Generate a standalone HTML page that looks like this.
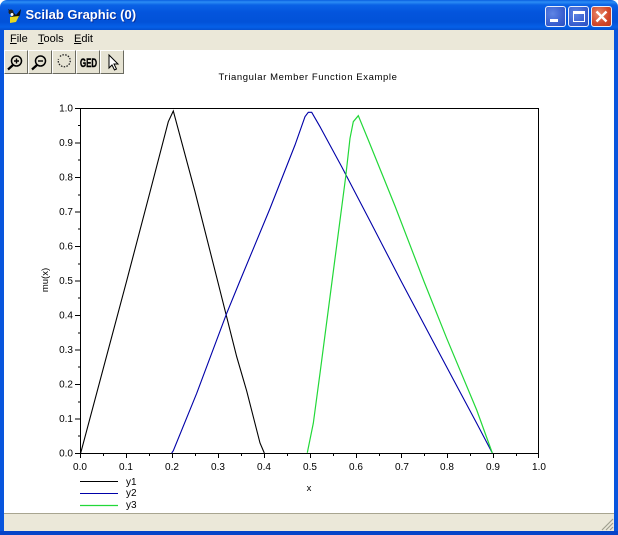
<!DOCTYPE html>
<html><head><meta charset="utf-8"><style>
html,body{margin:0;padding:0;background:#fff}
body{width:618px;height:535px;position:relative;overflow:hidden;font-family:"Liberation Sans",sans-serif}
div{position:absolute;box-sizing:border-box}
#tb{left:0;top:0;width:618px;height:30px;border-radius:7px 7px 0 0;background:linear-gradient(180deg,#0a5fe0 0,#2b8df5 2px,#0a62e6 5px,#0455dd 12px,#0252d8 22px,#0560e8 27px,#0450d0 30px)}
#title{left:25.500px;top:7px;font:bold 13px "Liberation Sans",sans-serif;color:#fff;text-shadow:1px 1px 0 #0a2f9a;white-space:nowrap}
.wb{top:6px;width:21px;height:21px;border:1px solid #e8eefc;border-radius:3px;background:radial-gradient(circle at 35% 35%,#5f85e4,#3a60d0 60%,#2a4fc0)}
#menu{left:4px;top:30px;width:610px;height:20px;background:#ebe8d9;font-size:11px;color:#000}
#menu span{position:absolute;top:3px}
#menu u{text-decoration:underline}
.b{top:50px;width:24px;height:24px;background:#e6e3d3;border:1px solid;border-color:#fff #6a6a60 #6a6a60 #fff}
#sb{left:4px;top:513px;width:610px;height:18px;background:#ebe8d9;border-top:1px solid #a8a590}
#lb{left:0;top:30px;width:4px;height:505px;background:#0855dd}
#rb{left:614px;top:30px;width:4px;height:505px;background:#0855dd}
#bb{left:0;top:531px;width:618px;height:4px;background:#0544c8}
svg{position:absolute;left:0;top:0}
text{font-family:"Liberation Sans",sans-serif;font-size:10px;fill:#000}
</style></head><body>
<div id="tb"></div>
<svg width="24" height="30" style="z-index:2"><path d="M8 9l5 3 3 3 5-6-1 6-2 3-5 1z" fill="#111"/><path d="M10 17l9-1-3 6-6 1z" fill="#e8d820"/><circle cx="11" cy="12" r="2.500" fill="#222"/><circle cx="12" cy="14.500" r="1.500" fill="#fff"/></svg>
<div id="title">Scilab Graphic (0)</div>
<div class="wb" style="left:545px"><div style="left:4px;top:12px;width:8px;height:3px;background:#fff"></div></div>
<div class="wb" style="left:568px"><div style="left:4px;top:4px;width:12px;height:11px;border:1px solid #fff;border-top:3px solid #fff"></div></div>
<div class="wb" style="left:591px;background:radial-gradient(circle at 35% 35%,#e88a6c,#d2472a 60%,#c03a20)"><svg width="19" height="19"><path d="M4.500 4.500L14.500 14.500M14.500 4.500L4.500 14.500" stroke="#fff" stroke-width="2.400"/></svg></div>
<div id="lb"></div><div id="rb"></div><div id="bb"></div>
<div id="menu"><span style="left:6px"><u>F</u>ile</span><span style="left:34px"><u>T</u>ools</span><span style="left:70px"><u>E</u>dit</span></div>
<div class="b" style="left:4px"><svg width="22" height="22"><circle cx="11.500" cy="10" r="5" fill="none" stroke="#000" stroke-width="1.500"/><path d="M8 14L3 18.500" stroke="#000" stroke-width="2.200"/><path d="M9 10h5M11.500 7.500v5" stroke="#000" stroke-width="1.400"/></svg></div>
<div class="b" style="left:28px"><svg width="22" height="22"><circle cx="11.500" cy="10" r="5" fill="none" stroke="#000" stroke-width="1.500"/><path d="M8 14L3 18.500" stroke="#000" stroke-width="2.200"/><path d="M9 10h5" stroke="#000" stroke-width="1.400"/></svg></div>
<div class="b" style="left:52px"><svg width="22" height="22"><path d="M7 5.500A6 6 0 1 1 5.500 8" fill="none" stroke="#222" stroke-width="1.300" stroke-dasharray="1.500 1.300"/></svg></div>
<div class="b" style="left:76px"><svg width="22" height="22"><text x="3" y="16" textLength="17" lengthAdjust="spacingAndGlyphs" style="font-size:12px;font-weight:bold;stroke:#000;stroke-width:.4">GED</text></svg></div>
<div class="b" style="left:100px"><svg width="22" height="22"><path d="M8 4v13l3-3 2.500 5 2-1-2.500-5h4z" fill="#fff" stroke="#000" stroke-width="1"/></svg></div>
<svg width="618" height="535" style="z-index:1;pointer-events:none">
<text x="308" y="80" text-anchor="middle" style="letter-spacing:.6px;font-size:9.500px">Triangular Member Function Example</text>
<path d="M80.500 108.500H538.500V453.500H80.500Z" fill="none" stroke="#000"/>
<path d="M75 108.500h5M78 125.500h2M75 143h5M78 160h2M75 177.500h5M78 195h2M75 212h5M78 229h2M75 246.500h5M78 264h2M75 281h5M78 298h2M75 315.500h5M78 333h2M75 350h5M78 367h2M75 384.500h5M78 402h2M75 419h5M78 436h2M75 453.500h5" stroke="#000"/>
<path d="M80.500 453v5M103.500 453v3M126.500 453v5M149.500 453v3M172.500 453v5M195.500 453v3M218.500 453v5M241.500 453v3M264.500 453v5M287.500 453v3M310.500 453v5M333.500 453v3M356.500 453v5M379.500 453v3M401.500 453v5M424.500 453v3M447.500 453v5M470.500 453v3M493.500 453v5M516.500 453v3M538.500 453v5" stroke="#000"/>
<g text-anchor="end">
<text x="73" y="111.500">1.0</text><text x="73" y="146">0.9</text><text x="73" y="180.500">0.8</text><text x="73" y="215">0.7</text><text x="73" y="249.500">0.6</text><text x="73" y="284">0.5</text><text x="73" y="318.500">0.4</text><text x="73" y="353">0.3</text><text x="73" y="387.500">0.2</text><text x="73" y="422">0.1</text><text x="73" y="456.500">0.0</text>
</g>
<g text-anchor="middle">
<text x="80" y="470">0.0</text><text x="126" y="470">0.1</text><text x="172" y="470">0.2</text><text x="218" y="470">0.3</text><text x="264" y="470">0.4</text><text x="310" y="470">0.5</text><text x="356" y="470">0.6</text><text x="402" y="470">0.7</text><text x="447" y="470">0.8</text><text x="493" y="470">0.9</text><text x="539" y="470">1.0</text>
<text x="309" y="491" style="font-size:9.500px">x</text>
<text transform="translate(48 280) rotate(-90)" style="font-size:9.500px">mu(x)</text>
</g>
<path d="M80.700 453L126.500 281.500 150 192 168.300 121.700 173.300 111 195 191.700 217.500 280.500 236.700 356.700 246.700 391 260 443 264.300 453" fill="none" stroke="#000" stroke-width="1.100"/>
<path d="M171.700 453L173.300 450.700 196.700 393.300 226.700 313.300 239.700 281.500 270 208.500 295 145 305 116.700 308.300 112.300 311.700 112.300 320 126.700 341.700 166.700 370 221 401.300 281.500 436.700 348.300 476.700 423.300 492.300 453" fill="none" stroke="#0000a8" stroke-width="1.100"/>
<path d="M307.300 452.700L313.300 423.300 320 373.300 332 281.500 345.700 176.700 350 138.300 353.300 121.700 358.300 115.700 368.300 140 395 206 424 281.500 446.700 338.300 476.700 410 492.300 453" fill="none" stroke="#22d838" stroke-width="1.200"/>
<path d="M80 481.500h38" stroke="#000"/><path d="M80 493.500h38" stroke="#0000a8"/><path d="M80 505.500h38" stroke="#22d838" stroke-width="1.200"/>
<text x="126" y="485">y1</text><text x="126" y="496">y2</text><text x="126" y="508">y3</text>
</svg>
<div id="sb"></div>
<svg width="618" height="535" style="z-index:3;pointer-events:none"><path d="M602 530L613 519M606 530L613 523M610 530L613 527" stroke="#a0a090" stroke-width="1.200"/></svg>
</body></html>
